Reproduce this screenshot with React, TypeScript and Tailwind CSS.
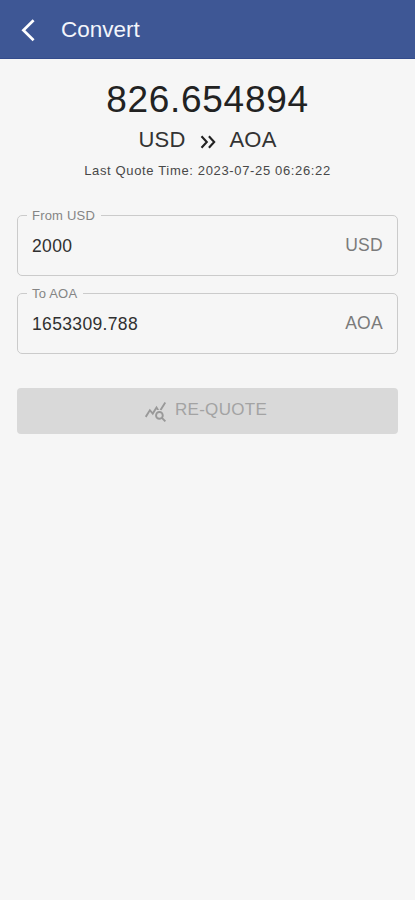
import { useState } from "react";
import { MdQueryStats } from "react-icons/md";

interface AmountFieldProps {
  label: string;
  currency: string;
  value: string;
  className: string;
  onChange: (value: string) => void;
}

function AmountField({ label, currency, value, className, onChange }: AmountFieldProps) {
  return (
    <fieldset
      className={`mx-[17px] min-w-0 rounded-[5px] border border-[#cbcbcb] pr-3.5 pl-[9px] ${className}`}
    >
      <legend className="h-3.5 pr-1.5 pl-[5px] text-[13px] leading-4 tracking-[0.2px] text-[#858585]">
        {label}
      </legend>
      <div className="flex h-full items-start pt-3 pl-[5px]">
        <input
          type="text"
          value={value}
          onChange={(e) => onChange(e.target.value)}
          className="h-6 min-w-0 flex-1 bg-transparent text-[17.5px] leading-6 tracking-[0.35px] text-[#303030] outline-none"
        />
        <span className="text-[17.5px] leading-[22px] tracking-[0.3px] text-[#7b7b7b]">{currency}</span>
      </div>
    </fieldset>
  );
}

export default function App() {
  const [from, setFrom] = useState("2000");
  const [to, setTo] = useState("1653309.788");

  return (
    <div className="flex h-screen flex-col bg-[#f6f6f6] font-['Liberation_Sans',Arial,sans-serif]">
      {/* App bar */}
      <header className="flex h-[59px] shrink-0 items-center border-b border-[#334b8c] bg-[#3e5795] pl-5">
        <button className="flex w-[41px]">
          <svg className="mt-0.5" width="16" height="24" viewBox="0 0 16 24" fill="none" stroke="#fff" strokeWidth="2.7">
            <path d="M13.6 2.3 3.4 12.3l10.2 10" />
          </svg>
        </button>
        <h1 className="pt-0.5 text-[22.5px] leading-7 text-[#f3f5fb]">Convert</h1>
      </header>

      {/* Quote */}
      <section className="flex flex-col items-center text-[#222]">
        <p className="mt-5 text-[37px] leading-[42px] tracking-[0.7px]">826.654894</p>
        <div className="mt-[5px] flex items-center text-[22px] leading-7 tracking-[0.2px] text-[#333]">
          <span>USD</span>
          <svg className="mx-3.5 mt-[3px]" width="16" height="14" viewBox="0 0 16 14" fill="none" stroke="#222" strokeWidth="2.1">
            <path d="m1.5 1.2 5.3 5.8-5.3 5.8M8.9 1.2l5.3 5.8-5.3 5.8" />
          </svg>
          <span>AOA</span>
        </div>
        <p className="mt-[9px] text-[13px] leading-4 tracking-[0.65px] text-[#484848]">
          Last Quote Time: 2023-07-25 06:26:22
        </p>
      </section>

      <AmountField label="From USD" currency="USD" value={from} onChange={setFrom} className="mt-[29px] h-[68px]" />
      <AmountField label="To AOA" currency="AOA" value={to} onChange={setTo} className="mt-2.5 h-[68px]" />

      <button
        disabled
        className="mx-[17px] mt-[34px] flex h-[46px] shrink-0 items-center justify-center rounded-[4px] bg-[#d9d9d9] pr-1 pb-0.5 text-[17px] leading-6 tracking-[0.3px] text-[#a3a3a3]"
      >
        <MdQueryStats className="mt-0.5 mr-2 size-[23px] text-[#999]" />
        RE-QUOTE
      </button>
    </div>
  );
}
